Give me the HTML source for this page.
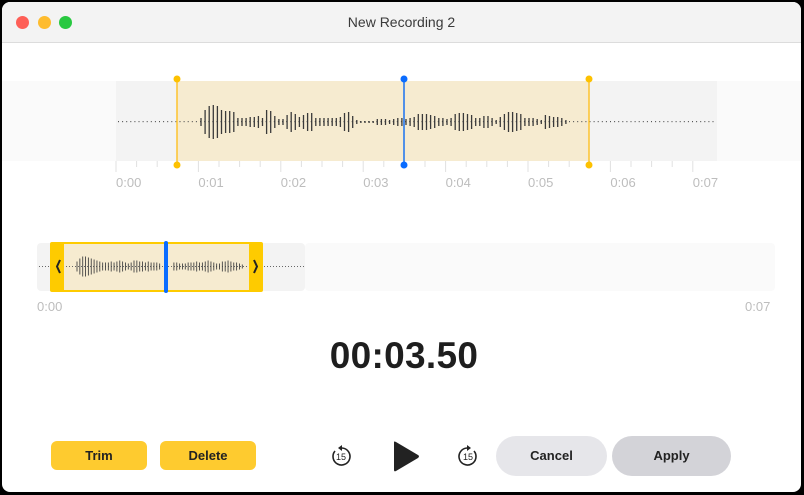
<!DOCTYPE html>
<html><head><meta charset="utf-8"><style>
html,body{margin:0;padding:0}
body{width:804px;height:495px;position:relative;overflow:hidden;background:#000;font-family:"Liberation Sans",sans-serif}
.win{position:absolute;left:2px;top:2px;width:799px;height:490px;background:#fff;border-radius:8px;overflow:hidden}
.title{position:absolute;left:0;top:0;width:100%;height:40px;background:#f3f3f3;border-bottom:1px solid #dcdcdc}
.title .t{position:absolute;left:0;right:0;top:12px;text-align:center;font-size:14px;color:#3a3a3a}
.dot{position:absolute;top:14px;width:13px;height:13px;border-radius:50%}
.lbl{position:absolute;font-size:13px;color:#bdbdbd}
.btn{position:absolute;font-weight:bold;font-size:13px;color:#222;text-align:center}
</style></head><body>
<div class="win">
<div class="title"><div class="dot" style="left:14px;background:#fe5f57"></div><div class="dot" style="left:36px;background:#febc2e"></div><div class="dot" style="left:57px;background:#28c840"></div><div class="t">New Recording 2</div></div>
<svg id="s" width="799" height="490" style="position:absolute;left:0;top:0"></svg>
<div class="lbl" style="left:35px;top:297px">0:00</div>
<div class="lbl" style="left:743px;top:297px">0:07</div>
<div style="position:absolute;left:0;width:804px;top:333px;text-align:center;font-size:37px;font-weight:bold;color:#1e1e1e;letter-spacing:0.3px">00:03.50</div>
<div class="btn" style="left:49px;top:439px;width:96px;height:29px;line-height:29px;background:#fecb2f;border-radius:6px">Trim</div>
<div class="btn" style="left:158px;top:439px;width:96px;height:29px;line-height:29px;background:#fecb2f;border-radius:6px">Delete</div>
<div class="btn" style="left:494px;top:434px;width:111px;height:40px;line-height:40px;background:#e6e6ea;border-radius:20px">Cancel</div>
<div class="btn" style="left:610px;top:434px;width:119px;height:40px;line-height:40px;background:#d3d3d8;border-radius:20px">Apply</div>
</div>
<script>
var s=document.getElementById('s'),h='';
function R(x,y,w,hh,c,r){h+='<rect x="'+x+'" y="'+y+'" width="'+w+'" height="'+hh+'" fill="'+c+'" rx="'+(r||0)+'"/>';}
function L(x1,y1,x2,y2,c,w){h+='<line x1="'+x1+'" y1="'+y1+'" x2="'+x2+'" y2="'+y2+'" stroke="'+c+'" stroke-width="'+w+'"/>';}
function T(x,y,t,sz,c){h+='<text x="'+x+'" y="'+y+'" font-size="'+sz+'" fill="'+c+'" font-family="Liberation Sans">'+t+'</text>';}
R(0,79,799,80,'#fafafa');R(114,79,601,80,'#f3f3f3');R(175,79,412,80,'#f6ebd0');
for(var i=0;i<=28;i++){var x=114+i*20.6;L(x,159,x,i%4==0?170:165,'#e0e0e0',1);}
for(var i=0;i<8;i++)T(114+i*82.4,185,'0:0'+i,13,'#bdbdbd');
for(var x=116;x<714;x+=4.1)R(x,119,1,1.2,'#555');
var amp=[4,12,16,17,16,12,11,11,10,4,4,4,5,5,6,4,12,11,6,3,3,7,10,8,5,7,9,9,4,4,4,4,4,4,5,9,10,6,2,1,1,1,1,3,3,3,2,3,4,4,3,4,5,8,8,8,7,6,4,4,3,4,8,9,9,8,7,4,4,6,6,4,2,5,8,10,10,9,8,4,4,4,3,2,7,6,5,5,4,2];
for(var k=0;k<amp.length;k++){var x=199+k*4.1,a=amp[k];if(x>572)break;L(x,120-a,x,120+a,'#3a3a3a',1.3);}
L(175,77,175,163,'#fdc32e',1.5);h+='<circle cx="175" cy="77" r="3.5" fill="#fdc100"/><circle cx="175" cy="163" r="3.5" fill="#fdc100"/>';
L(587,77,587,163,'#fdc32e',1.5);h+='<circle cx="587" cy="77" r="3.5" fill="#fdc100"/><circle cx="587" cy="163" r="3.5" fill="#fdc100"/>';
L(402,77,402,163,'#1a73f0',1.5);h+='<circle cx="402" cy="77" r="3.5" fill="#0a6cff"/><circle cx="402" cy="163" r="3.5" fill="#0a6cff"/>';
R(35,241,268,48,'#f3f3f3',4);R(303,241,470,48,'#fafafa',4);
for(var x=37;x<302;x+=3)R(x,264,1,1,'#666');
R(48,240,213,50,'#fecb00',2);R(62,242,185,46,'#f6ebd0');
for(var x=64;x<246;x+=3)R(x,264,1,1,'#666');
var m=[5,8,10,10,9,8,7,6,5,4,4,4,5,4,5,6,5,4,3,4,6,6,5,5,4,5,4,4,4,3,3,5,4,5,4,4,3,3,3,4,4,4,5,4,4,5,6,5,4,3,3,5,5,6,5,4,4,3,2,1];
for(var k=0;k<m.length;k++){var x=75+k*2.85;if(x>160&&x<170)continue;if(x>243)break;L(x,264.5-m[k],x,264.5+m[k],'#444',0.9);}
h+='<path d="M58 258 L55 264.5 L58 271" stroke="#222" stroke-width="2" fill="none"/><path d="M252 258 L255 264.5 L252 271" stroke="#222" stroke-width="2" fill="none"/>';
R(162,239,4,52,'#0a6cff',2);
function sk(cx,back){var d=back?'M'+(cx+1)+' 446 A8.5 8.5 0 1 1 '+(cx-6)+' 449':'M'+(cx-1)+' 446 A8.5 8.5 0 1 0 '+(cx+6)+' 449';
h+='<path d="'+d+'" stroke="#222" stroke-width="1.6" fill="none"/>';
h+=back?'<path d="M'+(cx-3)+' 446 L'+(cx+1)+' 443 L'+(cx+1)+' 449Z" fill="#222"/>':'<path d="M'+(cx+3)+' 446 L'+(cx-1)+' 443 L'+(cx-1)+' 449Z" fill="#222"/>';
h+='<text x="'+cx+'" y="458" font-size="9" text-anchor="middle" fill="#222" font-family="Liberation Sans">15</text>';}
sk(339,true);sk(466,false);
h+='<path d="M392 440 L392 468 Q392 470 394 469 L416 456 Q418 454 416 453 L394 440 Q392 439 392 440Z" fill="#222"/>';
s.innerHTML=h;
</script>
</body></html>
